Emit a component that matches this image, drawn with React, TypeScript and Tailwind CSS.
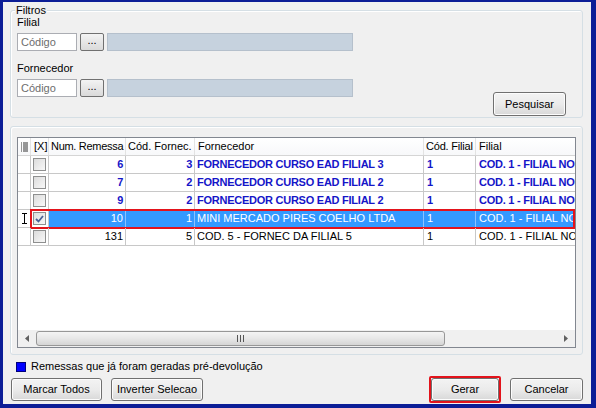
import React from "react";

type Row = {
  num: string;
  forn: string;
  nome: string;
  filial: string;
  filialNome: string;
  gerada: boolean;
  selected?: boolean;
};

const ROWS: Row[] = [
  { num: "6", forn: "3", nome: "FORNECEDOR CURSO EAD FILIAL 3", filial: "1", filialNome: "COD. 1 - FILIAL NORTE", gerada: true },
  { num: "7", forn: "2", nome: "FORNECEDOR CURSO EAD FILIAL 2", filial: "1", filialNome: "COD. 1 - FILIAL NORTE", gerada: true },
  { num: "9", forn: "2", nome: "FORNECEDOR CURSO EAD FILIAL 2", filial: "1", filialNome: "COD. 1 - FILIAL NORTE", gerada: true },
  { num: "10", forn: "1", nome: "MINI MERCADO PIRES COELHO LTDA", filial: "1", filialNome: "COD. 1 - FILIAL NORTE", gerada: false, selected: true },
  { num: "131", forn: "5", nome: "COD. 5 - FORNEC DA FILIAL 5", filial: "1", filialNome: "COD. 1 - FILIAL NORTE", gerada: false },
];

function Button({ label, className = "" }: { label: string; className?: string }) {
  return (
    <button
      className={`h-[23px] rounded-[3px] border border-[#707070] bg-gradient-to-b from-[#f3f3f3] via-[#ebebeb] to-[#d8d8d8] text-[11px] text-black shadow-[inset_0_0_0_1px_#fcfcfc] ${className}`}
    >
      {label}
    </button>
  );
}

function Checkbox({ checked }: { checked?: boolean }) {
  return (
    <div className="flex h-[13px] w-[13px] items-center justify-center border border-[#8e8f8f] bg-gradient-to-br from-[#dcdcdc] to-[#f8f8f8]">
      {checked && (
        <svg width="9" height="8" viewBox="0 0 9 8">
          <path d="M1 4 L3.5 6.5 L8 1" stroke="#4a5f97" strokeWidth="1.8" fill="none" />
        </svg>
      )}
    </div>
  );
}

function LookupRow() {
  return (
    <div className="flex h-[18px] items-center">
      <div className="flex h-[18px] w-[60px] items-center border border-[#abadb3] bg-white pl-[3px] text-[11px] text-[#6d6d6d]">
        Código
      </div>
      <button className="ml-[3px] flex h-[18px] w-[24px] items-center justify-center rounded-[2px] border border-[#707070] bg-gradient-to-b from-[#f3f3f3] to-[#dadada] pb-[4px] text-[11px] leading-none">
        ...
      </button>
      <div className="ml-[3px] h-[18px] w-[246px] border border-[#b5c0cc] bg-[#c6d2de]" />
    </div>
  );
}

const COLS = "grid-cols-[13px_18px_77px_69px_229px_52px_200px]";

export default function App() {
  return (
    <div
      className="box-border h-[408px] w-[596px] overflow-hidden border-b-4 border-l-[3px] border-r-[5px] border-t-2 border-[#0c1d96] bg-[#f0f0f0] text-[11px] text-black"
      style={{ fontFamily: '"Liberation Sans", Arial, sans-serif' }}
    >
      <div className="flex flex-col pl-[7px] pr-[8px] pt-[8px]">
        {/* Filtros */}
        <div className="relative h-[108px] rounded-[3px] border border-[#d5dfe5] shadow-[inset_1px_1px_0_#fff]">
          <span className="absolute left-[4px] top-[-7px] bg-[#f0f0f0] px-[1px] leading-[13px]">Filtros</span>
          <div className="flex h-full pl-[6px] pt-[5px]">
            <div className="flex flex-col">
              <div className="h-[13px] leading-[13px]">Filial</div>
              <div className="mt-[4px]">
                <LookupRow />
              </div>
              <div className="mt-[11px] h-[13px] leading-[13px]">Fornecedor</div>
              <div className="mt-[4px]">
                <LookupRow />
              </div>
            </div>
            <div className="ml-auto mr-[16px] flex items-end pb-[1px]">
              <Button label="Pesquisar" className="h-[24px] w-[73px]" />
            </div>
          </div>
        </div>

        {/* Grid panel */}
        <div className="mt-[8px] h-[229px] rounded-[3px] border border-[#d5dfe5] px-[6px] pt-[10px] shadow-[inset_1px_1px_0_#fff]">
          <div className="flex h-[211px] flex-col overflow-hidden border border-[#828790] bg-white">
            <div className="flex-1 overflow-hidden">
              <div className={`grid ${COLS} h-[18px] whitespace-nowrap border-b border-[#d5d5d5] bg-gradient-to-b from-white to-[#f7f8fa] leading-[17px]`}>
                <div className="flex items-center justify-center border-r border-[#e3e3e3]">
                  <svg width="7" height="10" viewBox="0 0 7 10">
                    {[0.5, 2.5, 4.5, 6.5, 8.5].map((y) => (
                      <g key={y}>
                        <rect x="0" y={y} width="1" height="1" fill="#333" />
                        <rect x="2" y={y} width="5" height="1" fill="#333" />
                      </g>
                    ))}
                  </svg>
                </div>
                <div className="border-r border-[#e3e3e3] pl-[3px]">[X]</div>
                <div className="border-r border-[#e3e3e3] pl-[2px] tracking-[-0.3px]">Num. Remessa</div>
                <div className="overflow-hidden border-r border-[#e3e3e3] pl-[2px]">Cód. Fornec.</div>
                <div className="border-r border-[#e3e3e3] pl-[3px]">Fornecedor</div>
                <div className="border-r border-[#e3e3e3] pl-[2px] tracking-[-0.2px]">Cód. Filial</div>
                <div className="pl-[3px]">Filial</div>
              </div>
              {ROWS.map((r) => {
                const txt = r.selected
                  ? "text-white"
                  : r.gerada
                    ? "font-bold tracking-[-0.25px] text-[#1515c8]"
                    : "text-black";
                const cell = r.selected ? "bg-[#3399ff] border-[#8cc2ff]" : "border-[#c8c8c8]";
                return (
                  <div key={r.num} className="relative">
                    <div className={`grid ${COLS} h-[18px] border-b border-[#c8c8c8] leading-[17px]`}>
                      <div className="flex items-center justify-center border-r border-[#c8c8c8]">
                        {r.selected && (
                          <svg width="5" height="11" viewBox="0 0 5 11">
                            <path d="M0 0.5 H5 M2.5 0.5 V10.5 M0 10.5 H5" stroke="#000" strokeWidth="1" fill="none" />
                          </svg>
                        )}
                      </div>
                      <div className="flex items-center justify-center border-r border-[#c8c8c8]">
                        <Checkbox checked={r.selected} />
                      </div>
                      <div className={`border-r pr-[2px] text-right ${cell} ${txt}`}>{r.num}</div>
                      <div className={`border-r pr-[2px] text-right ${cell} ${txt}`}>{r.forn}</div>
                      <div className={`overflow-hidden whitespace-nowrap border-r pl-[2px] ${cell} ${txt}`}>{r.nome}</div>
                      <div className={`border-r pl-[3px] ${cell} ${txt}`}>{r.filial}</div>
                      <div className={`overflow-hidden whitespace-nowrap pl-[3px] ${r.selected ? "bg-[#3399ff]" : ""} ${txt}`}>
                        {r.filialNome}
                      </div>
                    </div>
                    {r.selected && (
                      <div className="pointer-events-none absolute left-[12px] right-0 top-[-1px] h-[20px] border-2 border-[#e3131b]" />
                    )}
                  </div>
                );
              })}
            </div>
            {/* horizontal scrollbar */}
            <div className="flex h-[17px] items-center bg-[#f0f0f0] px-[1px]">
              <div className="flex h-[17px] w-[16px] items-center justify-center">
                <svg width="4" height="7" viewBox="0 0 4 7">
                  <path d="M4 0 L0 3.5 L4 7 Z" fill="#606060" />
                </svg>
              </div>
              <div className="ml-[1px] flex h-[15px] w-[409px] items-center justify-center rounded-[3px] border border-[#979797] bg-gradient-to-b from-[#f4f4f4] via-[#e7e7e7] to-[#d5d5d5]">
                <svg width="7" height="7" viewBox="0 0 7 7">
                  <rect x="0" y="0" width="1" height="7" fill="#555" />
                  <rect x="3" y="0" width="1" height="7" fill="#555" />
                  <rect x="6" y="0" width="1" height="7" fill="#555" />
                </svg>
              </div>
              <div className="flex-1" />
              <div className="flex h-[17px] w-[16px] items-center justify-center">
                <svg width="4" height="7" viewBox="0 0 4 7">
                  <path d="M0 0 L4 3.5 L0 7 Z" fill="#606060" />
                </svg>
              </div>
            </div>
          </div>
        </div>

        {/* Legend */}
        <div className="mt-[5px] flex h-[13px] items-center pl-[6px]">
          <div className="h-[10px] w-[10px] border border-[#00007a] bg-[#0000ff]" />
          <span className="ml-[5px]">Remessas que já foram geradas pré-devolução</span>
        </div>

        {/* Buttons */}
        <div className="mt-[3px] flex items-center pl-[1px]">
          <Button label="Marcar Todos" className="w-[91px]" />
          <Button label="Inverter Selecao" className="ml-[9px] w-[92px]" />
          <div className="ml-auto flex items-center">
            <div className="rounded-[2px] border-2 border-[#e3131b]">
              <Button label="Gerar" className="h-[19px] w-[68px]" />
            </div>
            <Button label="Cancelar" className="ml-[9px] w-[73px]" />
          </div>
        </div>
      </div>
    </div>
  );
}
